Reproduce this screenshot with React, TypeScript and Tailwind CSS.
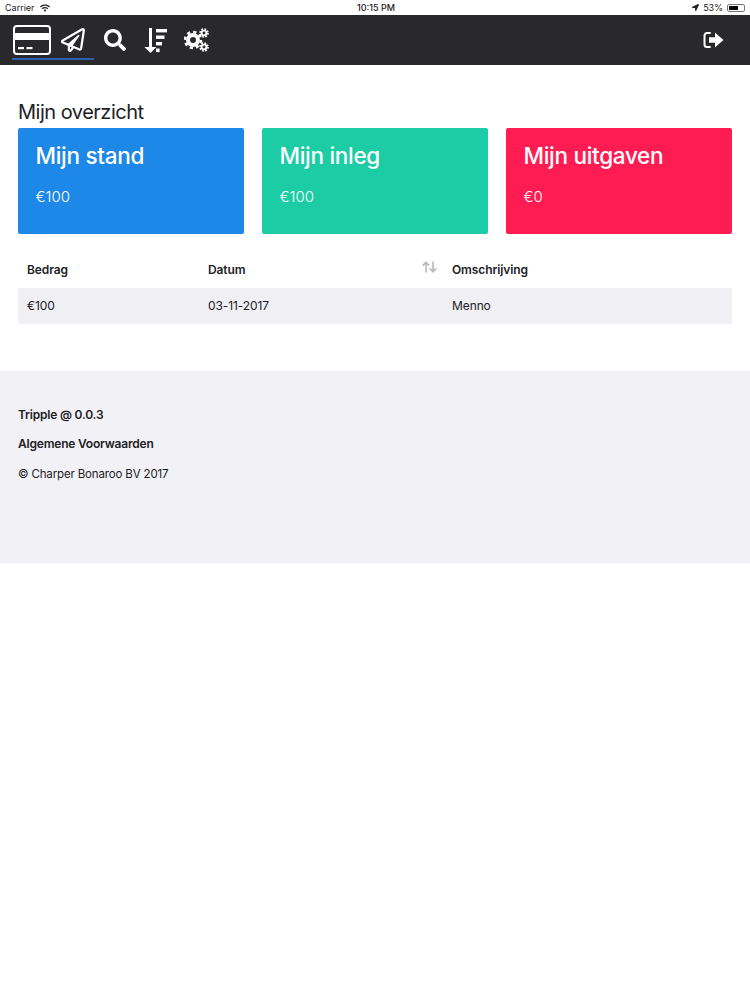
import { FaRegPaperPlane, FaSearch, FaLocationArrow, FaWifi } from "react-icons/fa";

const cards = [
  { title: "Mijn stand", amount: "€100", color: "bg-[#1e88e8]" },
  { title: "Mijn inleg", amount: "€100", color: "bg-[#1bcca4]" },
  { title: "Mijn uitgaven", amount: "€0", color: "bg-[#ff1c52]" },
];

function CardIcon() {
  return (
    <svg width="38" height="30" viewBox="0 0 38 30" fill="none" className="shrink-0">
      <rect x="1" y="1" width="36" height="28" rx="3" stroke="white" strokeWidth="2" />
      <rect x="1" y="8" width="36" height="7" fill="white" />
      <rect x="5" y="22" width="6" height="2.2" fill="white" />
      <rect x="13.5" y="22" width="6" height="2.2" fill="white" />
    </svg>
  );
}

function SortIcon() {
  return (
    <svg width="23" height="25" viewBox="0 0 23 25" fill="white" className="shrink-0">
      <path d="M5 0h3v19h4.4L6.5 25 0.4 19H5z" />
      <rect x="12" y="1" width="11" height="3.4" />
      <rect x="12" y="7.5" width="8.5" height="3.4" />
      <rect x="12" y="14" width="6" height="3.4" />
      <rect x="12" y="20.5" width="3.6" height="3.6" />
    </svg>
  );
}

function CogsIcon() {
  return (
    <svg width="25" height="24" viewBox="0 0 25 24" fill="none" stroke="white" className="shrink-0">
      <circle cx="9" cy="12" r="5" strokeWidth="4" />
      <circle cx="9" cy="12" r="8" strokeWidth="2.6" strokeDasharray="3.2 3.08" />
      <circle cx="20" cy="5" r="2.4" strokeWidth="1.9" />
      <circle cx="20" cy="5" r="4" strokeWidth="1.6" strokeDasharray="1.7 1.44" />
      <circle cx="20" cy="19" r="2.4" strokeWidth="1.9" />
      <circle cx="20" cy="19" r="4" strokeWidth="1.6" strokeDasharray="1.7 1.44" />
    </svg>
  );
}

function SignOutIcon() {
  return (
    <svg width="21" height="18" viewBox="0 0 21 18" fill="none">
      <path d="M7 2H4a2.5 2.5 0 0 0-2.5 2.5v9A2.5 2.5 0 0 0 4 16h3" stroke="white" strokeWidth="2" strokeLinecap="round" />
      <path d="M6 6.3h6V1.6L20.5 9 12 16.4v-4.7H6z" fill="white" />
    </svg>
  );
}

function SortArrows() {
  return (
    <svg width="15" height="12" viewBox="0 0 15 12" fill="none" stroke="#b9b9bb" strokeWidth="1.6">
      <path d="M4 11.5V1.2M0.8 4.6 4 1.2l3.2 3.4" />
      <path d="M11 0.5v10.3M7.8 7.4l3.2 3.4 3.2-3.4" />
    </svg>
  );
}

export default function App() {
  return (
    <div className="min-h-[1000px] bg-white text-[#212125] font-['Inter','Liberation_Sans',sans-serif]">
      {/* Status bar */}
      <div className="h-[15px] flex items-center justify-between pl-[5px] pr-[5px] text-[9px] leading-none text-[#222]">
        <div className="flex items-center gap-[5px] w-[200px]">
          <span>Carrier</span>
          <FaWifi size={10} />
        </div>
        <span className="font-medium pl-[2px]">10:15 PM</span>
        <div className="flex items-center justify-end gap-[4px] w-[200px]">
          <FaLocationArrow size={7} />
          <span>53%</span>
          <div className="w-[18px] h-[8px] border border-[#777] rounded-[2px] p-px">
            <div className="h-full w-[9px] bg-black" />
          </div>
        </div>
      </div>

      {/* Navbar */}
      <nav className="h-[50px] bg-[#29282a] flex items-center justify-between pl-[12px] pr-[26px] text-white">
        <div className="flex items-center">
          <div className="flex items-center gap-[10px] w-[82px] h-[40px] pt-[2px] pl-[1px] border-b-2 border-[#2f5fb3]">
            <CardIcon />
            <FaRegPaperPlane size={24} className="shrink-0" />
          </div>
          <div className="flex items-center ml-[10px]">
            <FaSearch size={22} />
            <div className="ml-[18px]">
              <SortIcon />
            </div>
            <div className="ml-[17px]">
              <CogsIcon />
            </div>
          </div>
        </div>
        <SignOutIcon />
      </nav>

      <main className="px-[18px] pt-[34px]">
        <h1 className="text-[20px] leading-[26px] mb-[3px] tracking-[-0.5px]">Mijn overzicht</h1>

        <div className="grid grid-cols-3 gap-[18px]">
          {cards.map((card) => (
            <div key={card.title} className={`h-[106px] rounded-[2px] px-[17.5px] pt-[15px] text-white ${card.color}`}>
              <div className="text-[22.5px] leading-[26px] font-medium tracking-[-0.3px]">{card.title}</div>
              <div className="text-[15px] leading-[20px] mt-[18px] font-light">{card.amount}</div>
            </div>
          ))}
        </div>

        {/* Table */}
        <div className="mt-[18px] text-[12px] tracking-[-0.1px]">
          <div className="grid grid-cols-[181px_244px_1fr] h-[36px] items-center pl-[9px] font-semibold">
            <span>Bedrag</span>
            <div className="relative">
              <span>Datum</span>
              <div className="absolute right-[15px] top-0">
                <SortArrows />
              </div>
            </div>
            <span>Omschrijving</span>
          </div>
          <div className="grid grid-cols-[181px_244px_1fr] h-[36px] items-center pl-[9px] bg-[#f0eff3]">
            <span>€100</span>
            <span>03-11-2017</span>
            <span>Menno</span>
          </div>
        </div>
      </main>

      {/* Footer */}
      <footer className="mt-[47px] h-[192px] bg-[#f2f1f5] px-[18px] pt-[36px] text-[12px] leading-[16px] tracking-[-0.2px]">
        <p className="font-semibold mb-[13px]">Tripple @ 0.0.3</p>
        <p className="font-semibold mb-[14px]">Algemene Voorwaarden</p>
        <p className="text-[11.5px] tracking-[-0.15px]">© Charper Bonaroo BV 2017</p>
      </footer>
    </div>
  );
}
